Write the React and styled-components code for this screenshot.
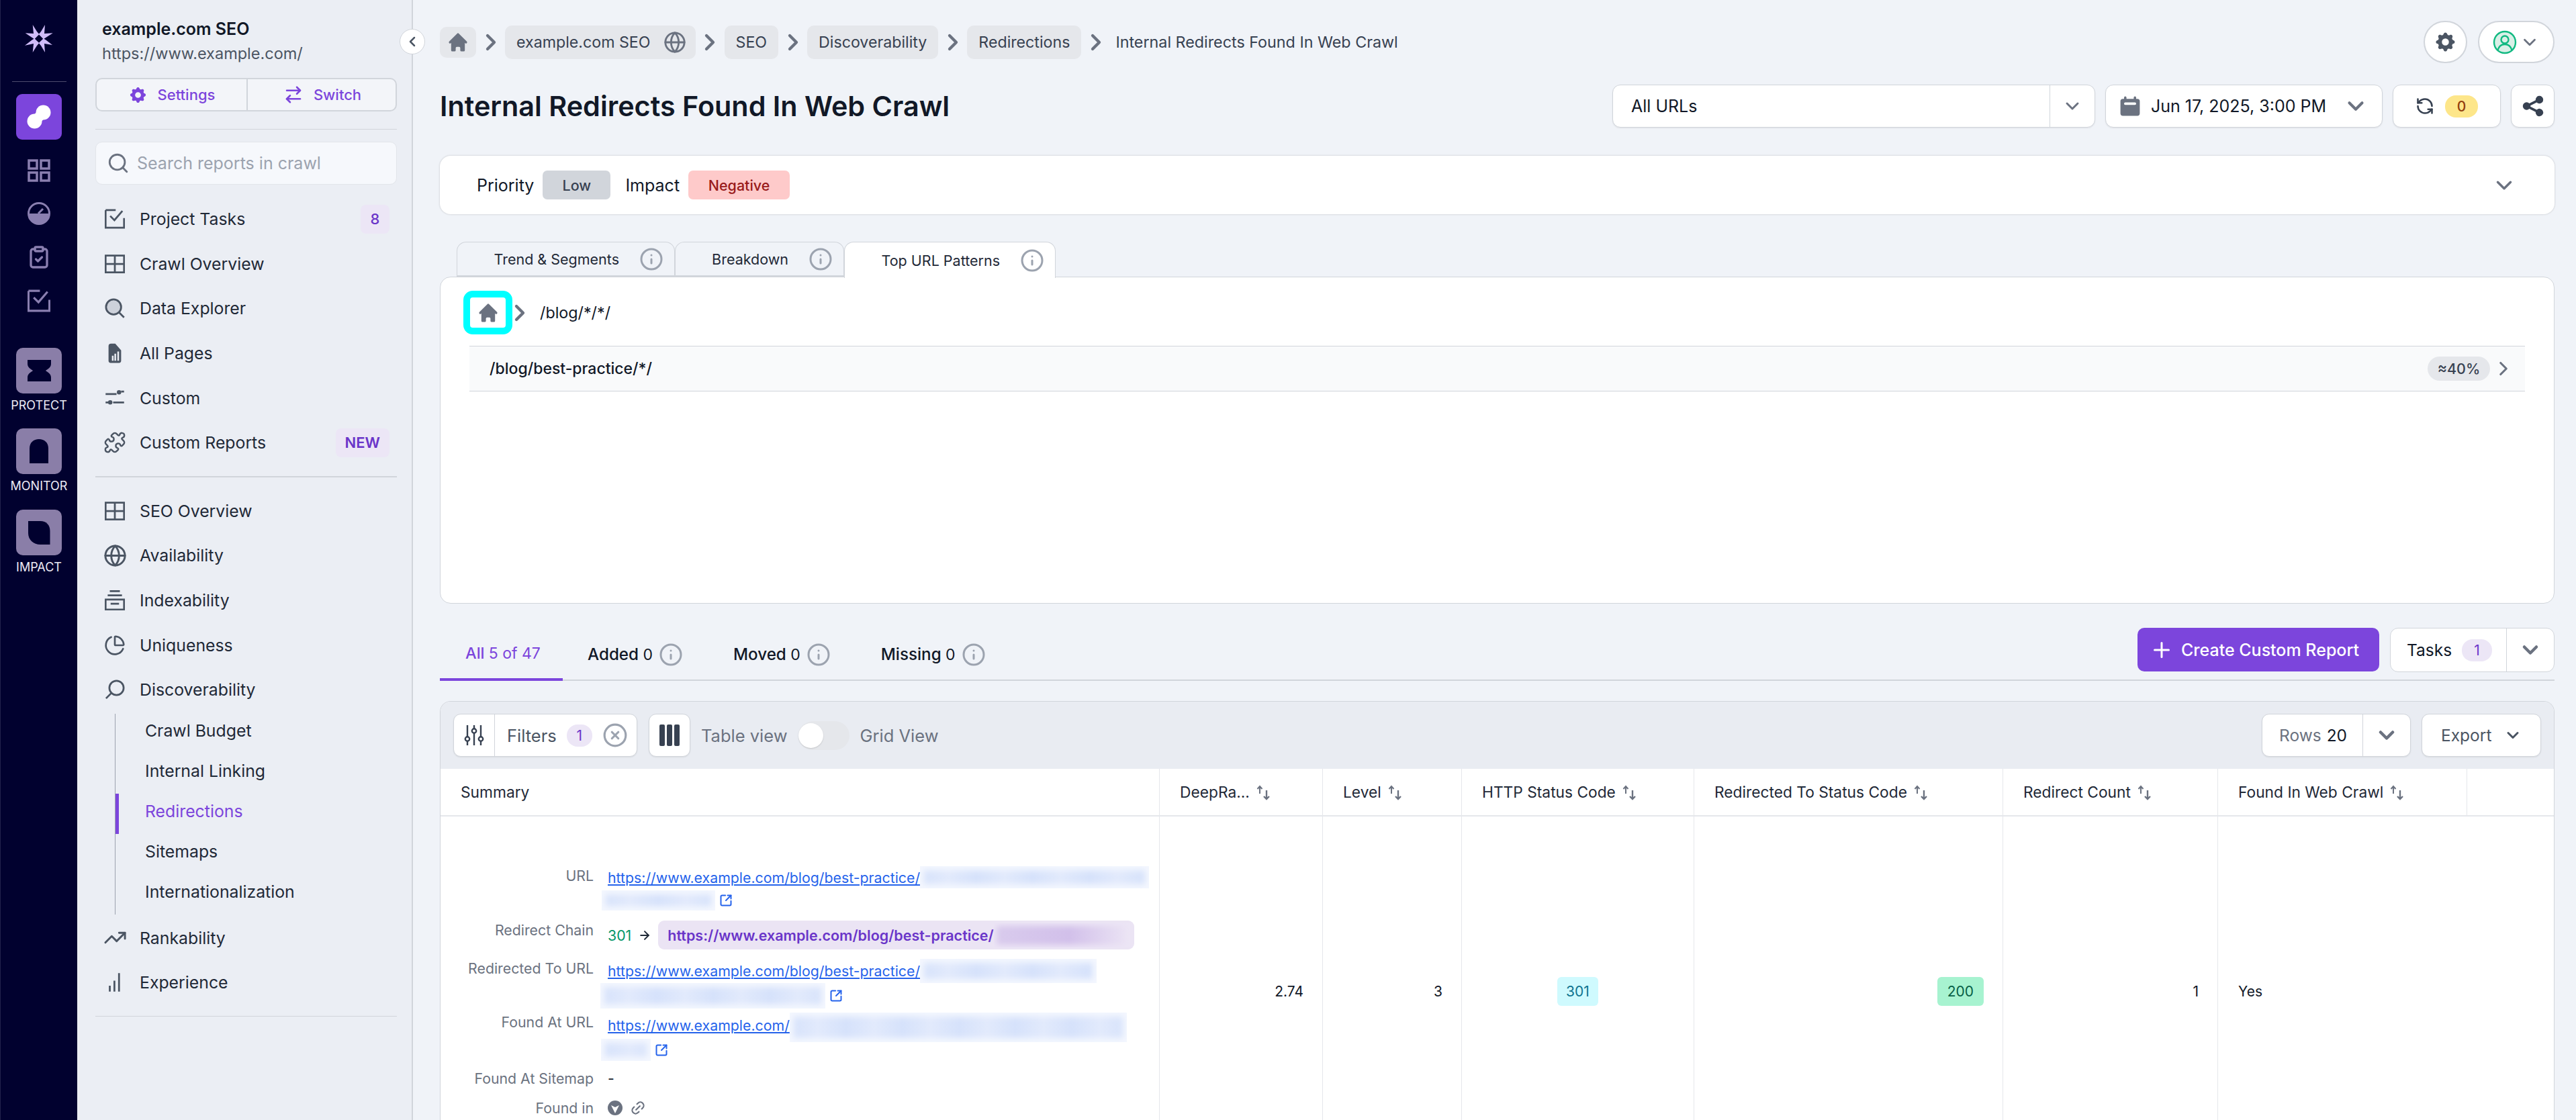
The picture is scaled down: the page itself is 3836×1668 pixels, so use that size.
import styled, { createGlobalStyle } from 'styled-components';
import {
  ArrowRight,
  ArrowRightLeft,
  ChartPie,
  ChevronDown,
  ChevronLeft,
  ChevronRight,
  CircleX,
  ClipboardCheck,
  Globe,
  Info,
  Link2,
  Plus,
  Puzzle,
  RefreshCcw,
  Search,
  SquareArrowOutUpRight,
  TrendingUp,
} from 'lucide-react';
import { HiCalendar, HiCog, HiHome, HiShare } from 'react-icons/hi';

const purple = '#7c45dc';

const Global = createGlobalStyle`
  html, body { margin: 0; padding: 0; background: #f0f3f8; }
  body { font-family: Inter, "Noto Sans", sans-serif; color: #111827; }
  * { box-sizing: border-box; }
  svg { display: block; flex: none; }
`;

const Page = styled.div`
  width: 3836px;
  height: 1668px;
  display: flex;
  overflow: hidden;
  background: #f0f3f8;
`;

/* far left rail */
const Rail = styled.nav`
  width: 115px;
  flex: none;
  background: #01012f;
  border-left: 1px solid #23224c;
  display: flex;
  flex-direction: column;
  align-items: center;
  padding-top: 37px;
`;
const RailRule = styled.div`
  width: 81px;
  height: 1px;
  background: #4d4c6d;
  margin-top: 42px;
`;
const ActiveTile = styled.div`
  width: 68px;
  height: 68px;
  flex: none;
  margin-top: 18px;
  border-radius: 9px;
  background: ${purple};
`;
const RailIcons = styled.div`
  display: flex;
  flex-direction: column;
  align-items: center;
  gap: 30px;
  margin-top: 29px;
  color: #8a7fb0;
`;
const RailGroup = styled.div`
  display: flex;
  flex-direction: column;
  align-items: center;
`;
const RailTile = styled.div`
  width: 68px;
  height: 68px;
  flex: none;
  border-radius: 10px;
  background: #8a7ea8;
  margin-top: ${(p) => p.$mt}px;
`;
const RailLabel = styled.div`
  margin-top: 7px;
  font-size: 18px;
  line-height: 22px;
  color: #eceaf4;
  white-space: nowrap;
`;

/* project sidebar */
const Sidebar = styled.aside`
  width: 500px;
  flex: none;
  position: relative;
  background: #ebeef4;
  border-right: 2px solid #d1d5db;
  padding: 28px 22px 0 27px;
`;
const Collapse = styled.button`
  position: absolute;
  top: 43px;
  right: -20px;
  width: 38px;
  height: 38px;
  padding: 0;
  border-radius: 50%;
  background: #fff;
  border: 1px solid #d1d5db;
  color: #4b5563;
  display: flex;
  align-items: center;
  justify-content: center;
  z-index: 2;
`;
const ProjectName = styled.div`
  padding-left: 10px;
  font-size: 25px;
  line-height: 30px;
  font-weight: 600;
  color: #111827;
`;
const ProjectUrl = styled.div`
  margin-top: 7px;
  padding-left: 10px;
  font-size: 23.500px;
  line-height: 30px;
  color: #4b5563;
`;
const SplitButtons = styled.div`
  margin-top: 21px;
  height: 50px;
  display: flex;
  background: #f3f5f9;
  border: 2px solid #d1d5db;
  border-radius: 10px;
`;
const SplitButton = styled.div`
  flex: ${(p) => p.$w}px 0 0;
  display: flex;
  align-items: center;
  justify-content: center;
  gap: 15px;
  font-size: 22px;
  font-weight: 500;
  color: ${purple};
  & + & { border-left: 2px solid #d1d5db; }
`;
const Rule = styled.div`
  height: ${(p) => p.$h || 1}px;
  background: #d1d5db;
  margin-top: ${(p) => p.$mt}px;
`;
const SearchBox = styled.div`
  margin-top: 18px;
  height: 64px;
  display: flex;
  align-items: center;
  gap: 11px;
  padding-left: 16px;
  background: #f6f8fc;
  border: 1.5px solid #e2e5ea;
  border-radius: 10px;
  font-size: 25px;
  color: #9ca3af;
  svg { color: #6b7280; }
`;
const Menu = styled.div`
  margin-top: ${(p) => p.$mt}px;
`;
const MenuItem = styled.div`
  height: 66.6px;
  display: flex;
  align-items: center;
  gap: 22px;
  padding: 0 11px 0 14px;
  font-size: 24.800px;
  color: #1f2937;
  svg { color: #4b5563; }
`;
const MenuGlobe = styled(Globe)`
  margin: 0 -2.5px;
`;
const MenuPie = styled(ChartPie)`
  margin: 0 -1px;
`;
const MenuPuzzle = styled(Puzzle)`
  margin: 0 -2px;
`;
const MenuTrend = styled(TrendingUp)`
  margin: 0 -2.5px;
`;
const MenuBadge = styled.span`
  margin-left: auto;
  height: 43px;
  padding: 0 14px;
  min-width: 43px;
  display: flex;
  align-items: center;
  justify-content: center;
  border-radius: 8px;
  background: #ece6f6;
  color: #6a35c9;
  font-size: 22px;
  font-weight: ${(p) => (p.$strong ? 600 : 500)};
`;
const SubMenu = styled.div`
  margin: 2px 0 2px 29px;
  border-left: 1.5px solid #9ca3af;
`;
const SubItem = styled.div`
  height: 59.8px;
  display: flex;
  align-items: center;
  padding: 0 0 8px 44px;
  font-size: 24.800px;
  color: ${(p) => (p.$active ? purple : '#1f2937')};
  box-shadow: ${(p) => (p.$active ? `inset 5px 0 0 ${purple}` : 'none')};
`;

/* main column */
const Main = styled.main`
  flex: 1;
  min-width: 0;
  padding: 31px 32px 0 40px;
`;
const TopBar = styled.div`
  height: 63px;
  display: flex;
  align-items: center;
`;
const Crumb = styled.div`
  height: ${(p) => (p.$home ? 46 : 50)}px;
  width: ${(p) => (p.$home ? '54px' : 'auto')};
  padding: ${(p) => (p.$home ? 0 : '0 17px')};
  display: flex;
  align-items: center;
  justify-content: center;
  gap: 19px;
  border-radius: 10px;
  background: #e5e7eb;
  font-size: 23.200px;
  color: #374151;
  svg { color: #6b7280; }
`;
const CrumbGlobe = styled(Globe)`
  margin-right: -3px;
`;
const CrumbSep = styled.div`
  width: 43px;
  display: flex;
  justify-content: center;
  color: #6b7280;
`;
const CrumbLast = styled.div`
  margin-left: 8px;
  font-size: 23.300px;
  color: #374151;
`;
const TopActions = styled.div`
  margin-left: auto;
  display: flex;
  gap: 16px;
`;
const RoundButton = styled.div`
  width: ${(p) => p.$w}px;
  height: 63px;
  display: flex;
  align-items: center;
  justify-content: center;
  gap: 4px;
  background: #fff;
  border: 2px solid #d1d5db;
  border-radius: 32px;
  color: #4b5563;
`;
const TitleRow = styled.div`
  margin-top: 32px;
  height: 64px;
  display: flex;
  align-items: center;
  justify-content: space-between;
`;
const Title = styled.h1`
  margin: 0;
  font-size: 41.300px;
  font-weight: 600;
  color: #111827;
`;
const Controls = styled.div`
  display: flex;
  gap: 15px;
`;
const Control = styled.div`
  width: ${(p) => p.$w}px;
  height: 64px;
  display: flex;
  align-items: center;
  background: #fff;
  border: 1.5px solid #d1d5db;
  border-radius: 12px;
  box-shadow: 0 1px 2px rgba(0, 0, 0, 0.08);
  font-size: 25px;
  color: #111827;
  padding: ${(p) => p.$pad || 0};
  justify-content: ${(p) => p.$justify || 'flex-start'};
  gap: ${(p) => p.$gap || 0}px;
`;
const ControlText = styled.span`
  flex: 1;
  padding-left: 27px;
`;
const ControlEnd = styled.div`
  width: 67px;
  height: 100%;
  border-left: 1px solid #d1d5db;
  display: flex;
  align-items: center;
  justify-content: center;
  color: #6b7280;
`;
const CountBadge = styled.span`
  width: 49px;
  height: 33px;
  border-radius: 16px;
  background: #fde68a;
  color: #92400e;
  font-size: 21px;
  font-weight: 500;
  display: flex;
  align-items: center;
  justify-content: center;
`;
const MetaCard = styled.section`
  margin-top: 42px;
  height: 87px;
  display: flex;
  align-items: center;
  padding: 0 56px 0 55px;
  background: #fff;
  border-radius: 16px;
  box-shadow: 0 0 3px rgba(0, 0, 0, 0.2);
  font-size: 25px;
  color: #111827;
`;
const CardChevron = styled(ChevronDown)`
  margin-left: auto;
  color: #6b7280;
`;
const Chip = styled.span`
  height: 43px;
  width: ${(p) => p.$w}px;
  margin: 0 22px 0 13px;
  display: flex;
  align-items: center;
  justify-content: center;
  border-radius: 7px;
  background: ${(p) => p.$bg};
  color: ${(p) => p.$fg};
  font-size: 21.500px;
  font-weight: 500;
`;
const Tabs = styled.div`
  margin: 41px 0 0 25px;
  height: 52px;
  display: flex;
`;
const Tab = styled.div`
  width: ${(p) => p.$w}px;
  height: ${(p) => (p.$active ? 54 : 52)}px;
  display: flex;
  align-items: center;
  justify-content: flex-end;
  gap: 30px;
  padding-right: 16px;
  position: relative;
  z-index: ${(p) => (p.$active ? 1 : 0)};
  background: ${(p) => (p.$active ? '#fff' : '#f0f3f8')};
  border: 1.5px solid #d1d5db;
  border-bottom: ${(p) => (p.$active ? 'none' : '2px solid #d1d5db')};
  border-radius: 14px 14px 0 0;
  font-size: 21.500px;
  color: #1f2937;
  svg { color: #9ca3af; }
`;
const Panel = styled.section`
  height: 487px;
  padding: 20px 43px 0 34px;
  background: #fff;
  border: 1.5px solid #d1d5db;
  border-radius: 16px;
`;
const PatternCrumbs = styled.div`
  display: flex;
  align-items: center;
  height: 65px;
  font-size: 23.300px;
  color: #111827;
`;
const HomeFrame = styled.div`
  width: 73px;
  height: 65px;
  display: flex;
  align-items: center;
  justify-content: center;
  border: 10px solid #00ffff;
  border-radius: 14px;
  color: #6b7280;
`;
const PatternSep = styled.div`
  width: 40px;
  margin: 0 10px 0 -9px;
  color: #6b7280;
`;
const PatternRow = styled.div`
  margin: 17px 0 0 9px;
  height: 68px;
  display: flex;
  align-items: center;
  padding: 0 15px 0 30px;
  background: #f9fafb;
  border-top: 1.5px solid #d1d5db;
  border-bottom: 1px solid #d1d5db;
  font-size: 23px;
  font-weight: 500;
  color: #111827;
  svg { color: #6b7280; }
`;
const PercentBadge = styled.span`
  margin: 0 3px 0 auto;
  height: 36px;
  width: 93px;
  border-radius: 18px;
  display: flex;
  align-items: center;
  justify-content: center;
  background: #e5e7eb;
  color: #374151;
  font-size: 21.500px;
  font-weight: 500;
`;
const SubTabsRow = styled.div`
  height: 115px;
  padding-top: 36px;
  display: flex;
  align-items: flex-start;
  justify-content: space-between;
  border-bottom: 2px solid #d1d5db;
`;
const SubTabs = styled.div`
  height: 79px;
  display: flex;
`;
const SubTab = styled.div`
  display: flex;
  align-items: center;
  gap: 9px;
  height: 79px;
  width: ${(p) => (p.$active ? '183px' : 'auto')};
  padding: 0 ${(p) => (p.$active ? '0' : '35px')} 0 ${(p) => (p.$active ? '38px' : '37px')};
  margin-right: ${(p) => (p.$active ? 0 : 3)}px;
  margin-bottom: -2px;
  font-size: ${(p) => (p.$active ? 23.5 : 24.2)}px;
  font-weight: 500;
  color: ${(p) => (p.$active ? purple : '#111827')};
  border-bottom: ${(p) => (p.$active ? `4px solid ${purple}` : 'none')};
  svg { color: #9ca3af; }
`;
const Count = styled.span`
  font-weight: 400;
  font-size: 23px;
`;
const SubActions = styled.div`
  display: flex;
  gap: 16px;
`;
const CreateButton = styled.div`
  width: 360px;
  height: 65px;
  display: flex;
  align-items: center;
  gap: 11.500px;
  padding-left: 17.500px;
  background: ${purple};
  border-radius: 10px;
  color: #fff;
  font-size: 25px;
  font-weight: 500;
`;
const TasksButton = styled.div`
  width: 245px;
  height: 66px;
  display: flex;
  align-items: center;
  background: #fff;
  border: 1.5px solid #d1d5db;
  border-radius: 12px;
  font-size: 24.500px;
  color: #111827;
`;
const TasksLabel = styled.div`
  width: 173px;
  height: 100%;
  display: flex;
  align-items: center;
  gap: 15px;
  padding-left: 24px;
  border-right: 1.5px solid #d1d5db;
`;
const PillCount = styled.span`
  width: ${(p) => p.$w}px;
  height: 33px;
  border-radius: 16px;
  background: #ece6f6;
  color: #6a35c9;
  font-size: 21px;
  display: flex;
  align-items: center;
  justify-content: center;
`;
const GrayEnd = styled.div`
  flex: 1;
  display: flex;
  justify-content: center;
  color: #6b7280;
`;
const TableWrap = styled.section`
  margin-top: 30px;
  border: 1.5px solid #d1d5db;
  border-bottom: none;
  border-radius: 16px 16px 0 0;
  overflow: hidden;
  background: #fff;
`;
const Toolbar = styled.div`
  height: 100px;
  display: flex;
  align-items: center;
  padding: 0 19px;
  background: #e9ecf2;
  font-size: 24.500px;
`;
const ToolButton = styled.div`
  height: 64px;
  display: flex;
  align-items: center;
  background: #fff;
  border: 1.5px solid #d1d5db;
  border-radius: 11px;
  color: #374151;
  box-shadow: 0 1px 2px rgba(0, 0, 0, 0.08);
  margin-left: ${(p) => p.$ml || 0}px;
  width: ${(p) => p.$w}px;
  flex: none;
`;
const FilterIconBox = styled.div`
  width: 61px;
  height: 100%;
  display: flex;
  align-items: center;
  justify-content: center;
  border-right: 1px solid #d1d5db;
`;
const FilterBody = styled.div`
  flex: 1;
  display: flex;
  align-items: center;
  gap: 15px;
  padding-left: 18px;
  font-size: 25.500px;
  color: #4b5563;
  svg { color: #9ca3af; }
`;
const Centered = styled.div`
  flex: 1;
  display: flex;
  justify-content: center;
`;
const ViewLabel = styled.span`
  margin: 0 16px;
  font-size: 25.500px;
  color: #6b7280;
`;
const Toggle = styled.div`
  width: 76px;
  height: 43px;
  border-radius: 22px;
  background: #e5e7eb;
  display: flex;
  align-items: center;
`;
const Knob = styled.div`
  width: 37px;
  height: 37px;
  border-radius: 50%;
  background: #fff;
  box-shadow: 0 1px 2px rgba(0, 0, 0, 0.15);
`;
const RowsLabel = styled.div`
  width: 150px;
  height: 100%;
  display: flex;
  align-items: center;
  gap: 8px;
  padding-left: 25px;
  border-right: 1px solid #d1d5db;
  color: #6b7280;
  b { font-weight: 400; color: #111827; }
`;
const ExportLabel = styled.div`
  display: flex;
  align-items: center;
  gap: 18px;
  padding-left: 28px;
  color: #4b5563;
  svg { color: #4b5563; }
`;
const ToolbarEnd = styled.div`
  margin-left: auto;
  display: flex;
  gap: 16px;
`;

const HeadRow = styled.div`
  display: grid;
  grid-template-columns: 1070px 243px 207px 346px 460px 320px 371px 1fr;
  height: 71px;
  border-bottom: 2px solid #e5e7eb;
`;
const HeadCell = styled.div`
  display: flex;
  align-items: center;
  gap: 8px;
  padding-left: 30px;
  font-size: 22.750px;
  color: #1f2937;
  white-space: nowrap;
  & + & { border-left: 1.5px solid #e5e7eb; }
`;
const BodyRow = styled.div`
  display: grid;
  grid-template-columns: 1070px 243px 207px 346px 460px 320px 1fr;
  height: 520px;
`;
const Cell = styled.div`
  display: flex;
  align-items: center;
  justify-content: ${(p) => p.$align || 'flex-end'};
  padding: 0 ${(p) => (p.$pad === undefined ? 28 : p.$pad)}px 0 30px;
  font-size: 21px;
  color: #111827;
  border-left: 1.5px solid #e5e7eb;
`;
const SummaryCell = styled.div`
  padding-top: 74px;
  font-size: 21.300px;
`;
const SummaryRow = styled.div`
  display: grid;
  grid-template-columns: 228px 1fr;
  column-gap: 21px;
  margin-top: ${(p) => p.$mt || 0}px;
`;
const FieldLabel = styled.div`
  text-align: right;
  line-height: 28px;
  color: #6b7280;
  white-space: nowrap;
`;
const ValueLine = styled.div`
  display: flex;
  align-items: ${(p) => (p.$top ? 'flex-start' : 'center')};
  height: ${(p) => p.$h}px;
  margin-left: ${(p) => p.$ml || 0}px;
  margin-top: ${(p) => p.$mt || 0}px;
  color: #111827;
`;
const TextLink = styled.a`
  color: #2563eb;
  text-decoration: underline;
  white-space: nowrap;
  line-height: ${(p) => (p.$h ? `${p.$h}px` : 'normal')};
`;
const Blur = styled.span`
  display: block;
  flex: none;
  width: ${(p) => p.$w}px;
  height: ${(p) => p.$h}px;
  background: repeating-linear-gradient(90deg, #d6e2fb 0, #e2eafc 42px, #d6e2fb 84px);
  box-shadow: inset 0 0 10px 6px #f4f7fe;
`;
const ChainBlur = styled.span`
  display: block;
  flex: none;
  width: 203px;
  height: 36px;
  background: linear-gradient(90deg, #d9cbed, #d2c0ea 55%, #ece5f5);
  box-shadow: inset 0 0 8px 4px #ece5f5;
`;
const ExternalIcon = styled(SquareArrowOutUpRight)`
  color: #2563eb;
  margin-left: 6px;
`;
const ChainCode = styled.span`
  color: #059669;
`;
const ChainArrow = styled(ArrowRight)`
  margin: 0 10px;
  color: #1f2937;
`;
const ChainChip = styled.div`
  width: 709px;
  height: 43px;
  display: flex;
  align-items: center;
  padding: 0 6px 0 14px;
  border-radius: 9px;
  background: #ebe4f4;
  color: #6a35c9;
  font-size: 21.500px;
  font-weight: 600;
  white-space: nowrap;
`;
const Status = styled.span`
  height: 43px;
  padding: 0 ${(p) => p.$pad}px;
  display: flex;
  align-items: center;
  border-radius: 6px;
  background: ${(p) => p.$bg};
  color: ${(p) => p.$fg};
`;
const FoundIcons = styled.div`
  display: flex;
  align-items: center;
  gap: 11px;
  color: #6b7280;
`;
const ChainLink = styled(Link2)`
  transform: rotate(-45deg);
`;

/* drawn icons that the packages don't have in this shape */
const Glyph = ({ size = 30, children, fill = 'none', stroke = 'currentColor', sw = 2.2 }) => (
  <svg width={size} height={size} viewBox="0 0 24 24" fill={fill} stroke={stroke} strokeWidth={sw}>
    {children}
  </svg>
);

const TaskIcon = ({ size }) => (
  <Glyph size={size}>
    <path d="M1 1.5h12M1 1.5v21h22V11" />
    <path d="M6.5 8.5l5 5L21 2.5" />
  </Glyph>
);
const GridIcon = () => (
  <Glyph>
    <path d="M1 2h22v20H1zM12 2v20M1 12h22" />
  </Glyph>
);
const ExplorerIcon = () => (
  <Glyph>
    <circle cx="10.5" cy="10.5" r="9" fill="#cdd1da" />
    <path d="M17 17l6 6" />
  </Glyph>
);
const PagesIcon = () => (
  <svg width="30" height="30" viewBox="0 0 24 24">
    <path d="M4.5 3.5a3 3 0 013-3h5l7 8v12.5a2.5 2.5 0 01-2.5 2.5H7a2.5 2.5 0 01-2.5-2.5z" fill="currentColor" />
    <path d="M8.5 15h2v6h-2zM11.500 12.500h2V21h-2zM15 10h2v11h-2z" fill="#ebeef4" />
  </svg>
);
const SlidersIcon = () => (
  <Glyph>
    <circle cx="17" cy="5" r="2.600" fill="currentColor" stroke="none" />
    <circle cx="6.500" cy="17" r="2.600" fill="currentColor" stroke="none" />
    <path d="M1 7h13M19.500 4h3.500M1 17h3M10 17h13" />
  </Glyph>
);
const BoxIcon = () => (
  <Glyph>
    <path d="M6 1h12M3.500 6h17M1 11h22v12H1zM7 16h10" />
  </Glyph>
);
const LensIcon = () => (
  <Glyph>
    <circle cx="14" cy="10" r="8.500" />
    <path d="M7.500 16.500L1.500 22.500" />
  </Glyph>
);
const BarsIcon = () => (
  <Glyph>
    <path d="M6 23v-7M11.500 23V10M17 23V1" />
  </Glyph>
);
const SquaresIcon = () => (
  <svg width="34" height="34" viewBox="0 0 34 34" fill="none" stroke="currentColor" strokeWidth="3.500">
    <path d="M2 2h12v12H2zM20 2h12v12H20zM2 20h12v12H2zM20 20h12v12H20z" />
  </svg>
);
const GaugeIcon = () => (
  <svg width="34" height="34" viewBox="0 0 34 34">
    <circle cx="17" cy="17" r="15.500" fill="none" stroke="currentColor" strokeWidth="3" />
    <path d="M1.500 17h31a15.500 15.500 0 01-31 0z" fill="currentColor" />
    <path d="M16 17l7-7" stroke="currentColor" strokeWidth="3" />
  </svg>
);
const LogoStar = () => (
  <svg width="42" height="42" viewBox="0 0 42 42">
    <path
      fillRule="evenodd"
      fill="#d0bcf8"
      d="M11.700 0L18 10L21 13.500L24 10L30 0L29 13L41.700 12.300L32 18.500L28.500 20.700L32 23L41 30L29 28L30 41L24 31L21 27.500L18 31L11.700 41L13 28L0 30.700L10 23L13.500 20.700L10 18.500L.7 12.300L13 13ZM21 14.500L14.800 20.700L21 26.800L27.200 20.700Z"
    />
  </svg>
);
const LinkBlob = () => (
  <svg width="68" height="68" viewBox="0 0 68 68">
    <circle cx="40.500" cy="27.500" r="11" fill="#fff" />
    <circle cx="27.500" cy="40.500" r="11" fill="#fff" />
    <path d="M38 30L30 38" stroke="#fff" strokeWidth="15" />
  </svg>
);
const TileShape = ({ d }) => (
  <svg width="68" height="68" viewBox="0 0 68 68">
    <path d={d} fill="#01012f" />
  </svg>
);
const UserIcon = () => (
  <svg width="36" height="36" viewBox="0 0 36 36" fill="none" stroke="#10b981" strokeWidth="2.400">
    <circle cx="18" cy="18" r="16" fill="#d9f0e7" />
    <circle cx="18" cy="14" r="5.500" />
    <path d="M7.500 30c1.500-6 5.500-9 10.500-9s9 3 10.500 9" />
  </svg>
);
const FiltersIcon = () => (
  <svg width="30" height="32" viewBox="0 0 30 32" fill="none" stroke="#374151" strokeWidth="2.400">
    <path d="M5 1v17M5 25v6M15 1v5M15 13v18M25 1v17M25 25v6" />
    <circle cx="5" cy="21.500" r="3.200" />
    <circle cx="15" cy="9.500" r="3.200" />
    <circle cx="25" cy="21.500" r="3.200" />
  </svg>
);
const ColumnsIcon = () => (
  <svg width="30" height="32" viewBox="0 0 30 32" fill="#374151">
    <rect x="0" y="0" width="8" height="32" rx="2" />
    <rect x="11" y="0" width="8" height="32" rx="2" />
    <rect x="22" y="0" width="8" height="32" rx="2" />
  </svg>
);
const SortIcon = () => (
  <svg width="24" height="24" viewBox="0 0 24 24" fill="none" stroke="#6b7280" strokeWidth="2">
    <path d="M7 14V3M3.500 7L7 3l3.500 4" />
    <path d="M17 9v13M13 18l4 4 4-4" strokeWidth="2.400" />
  </svg>
);
const FoundBadge = () => (
  <svg width="22" height="24" viewBox="0 0 22 24">
    <circle cx="11" cy="12" r="11" fill="currentColor" />
    <path d="M5 8l6 3 6-3-6 12z" fill="#fff" />
    <circle cx="11" cy="7" r="2.500" fill="currentColor" />
  </svg>
);

const crumbs = ['SEO', 'Discoverability', 'Redirections'];

const railTiles = [
  { label: 'PROTECT', mt: 53, d: 'M17 18H52V24C52 30 46 32 44 34C46 36 52 38 52 44V50H17V44C17 38 23 36 25 34C23 32 17 30 17 24Z' },
  { label: 'MONITOR', mt: 23, d: 'M20 52V30C20 21 26 16 34 16S48 21 48 30V52Z' },
  { label: 'IMPACT', mt: 24, d: 'M18 17H36C45 17 50.500 23 50.500 32V52H36C26 52 18 45 18 35Z' },
];

const Chevron = () => <ChevronRight size={40} strokeWidth={2.6} />;

function CrumbStep({ name }) {
  return (
    <>
      <CrumbSep>
        <Chevron />
      </CrumbSep>
      <Crumb>{name}</Crumb>
    </>
  );
}

export default function App() {
  return (
    <>
      <Global />
      <Page>
        <Rail>
          <LogoStar />
          <RailRule />
          <ActiveTile>
            <LinkBlob />
          </ActiveTile>
          <RailIcons>
            <SquaresIcon />
            <GaugeIcon />
            <ClipboardCheck size={36} strokeWidth={2.2} />
            <TaskIcon size={34} />
          </RailIcons>
          {railTiles.map((tile) => (
            <RailGroup key={tile.label}>
              <RailTile $mt={tile.mt}>
                <TileShape d={tile.d} />
              </RailTile>
              <RailLabel>{tile.label}</RailLabel>
            </RailGroup>
          ))}
        </Rail>

        <Sidebar>
          <Collapse>
            <ChevronLeft size={24} strokeWidth={2.5} />
          </Collapse>
          <ProjectName>example.com SEO</ProjectName>
          <ProjectUrl>https://www.example.com/</ProjectUrl>
          <SplitButtons>
            <SplitButton $w={223}>
              <HiCog size={29} />
              Settings
            </SplitButton>
            <SplitButton $w={224}>
              <ArrowRightLeft size={30} />
              Switch
            </SplitButton>
          </SplitButtons>
          <Rule $mt={26} />
          <SearchBox>
            <Search size={34} />
            Search reports in crawl
          </SearchBox>
          <Menu $mt={18}>
            <MenuItem>
              <TaskIcon />
              Project Tasks
              <MenuBadge>8</MenuBadge>
            </MenuItem>
            <MenuItem>
              <GridIcon />
              Crawl Overview
            </MenuItem>
            <MenuItem>
              <ExplorerIcon />
              Data Explorer
            </MenuItem>
            <MenuItem>
              <PagesIcon />
              All Pages
            </MenuItem>
            <MenuItem>
              <SlidersIcon />
              Custom
            </MenuItem>
            <MenuItem>
              <MenuPuzzle size={34} strokeWidth={1.7} />
              Custom Reports
              <MenuBadge $strong>NEW</MenuBadge>
            </MenuItem>
          </Menu>
          <Rule $mt={16} $h={2} />
          <Menu $mt={17}>
            <MenuItem>
              <GridIcon />
              SEO Overview
            </MenuItem>
            <MenuItem>
              <MenuGlobe size={35} strokeWidth={2} />
              Availability
            </MenuItem>
            <MenuItem>
              <BoxIcon />
              Indexability
            </MenuItem>
            <MenuItem>
              <MenuPie size={32} strokeWidth={2} />
              Uniqueness
            </MenuItem>
            <MenuItem>
              <LensIcon />
              Discoverability
            </MenuItem>
            <SubMenu>
              <SubItem>Crawl Budget</SubItem>
              <SubItem>Internal Linking</SubItem>
              <SubItem $active>Redirections</SubItem>
              <SubItem>Sitemaps</SubItem>
              <SubItem>Internationalization</SubItem>
            </SubMenu>
            <MenuItem>
              <MenuTrend size={35} strokeWidth={2} />
              Rankability
            </MenuItem>
            <MenuItem>
              <BarsIcon />
              Experience
            </MenuItem>
          </Menu>
          <Rule $mt={16} />
        </Sidebar>

        <Main>
          <TopBar>
            <Crumb $home>
              <HiHome size={34} />
            </Crumb>
            <CrumbSep>
              <Chevron />
            </CrumbSep>
            <Crumb>
              example.com SEO
              <CrumbGlobe size={34} strokeWidth={2} />
            </Crumb>
            {crumbs.map((name) => (
              <CrumbStep key={name} name={name} />
            ))}
            <CrumbSep>
              <Chevron />
            </CrumbSep>
            <CrumbLast>Internal Redirects Found In Web Crawl</CrumbLast>
            <TopActions>
              <RoundButton $w={65}>
                <HiCog size={35} />
              </RoundButton>
              <RoundButton $w={114}>
                <UserIcon />
                <ChevronDown size={30} color="#6b7280" strokeWidth={2.2} />
              </RoundButton>
            </TopActions>
          </TopBar>

          <TitleRow>
            <Title>Internal Redirects Found In Web Crawl</Title>
            <Controls>
              <Control $w={719}>
                <ControlText>All URLs</ControlText>
                <ControlEnd>
                  <ChevronDown size={32} strokeWidth={2.2} />
                </ControlEnd>
              </Control>
              <Control $w={413} $pad="0 8px 0 18px" $gap={13}>
                <HiCalendar size={36} color="#6b7280" />
                Jun 17, 2025, 3:00 PM
                <GrayEnd>
                  <ChevronDown size={38} strokeWidth={2.6} />
                </GrayEnd>
              </Control>
              <Control $w={161} $justify="center" $gap={16}>
                <RefreshCcw size={28} color="#374151" strokeWidth={2.2} />
                <CountBadge>0</CountBadge>
              </Control>
              <Control $w={65} $justify="center">
                <HiShare size={38} color="#374151" />
              </Control>
            </Controls>
          </TitleRow>

          <MetaCard>
            Priority
            <Chip $w={101} $bg="#d1d5db" $fg="#374151">
              Low
            </Chip>
            Impact
            <Chip $w={151} $bg="#fecaca" $fg="#991b1b">
              Negative
            </Chip>
            <CardChevron size={38} strokeWidth={2.2} />
          </MetaCard>

          <Tabs>
            <Tab $w={325}>
              Trend &amp; Segments
              <Info size={36} strokeWidth={2} />
            </Tab>
            <Tab $w={252}>
              Breakdown
              <Info size={36} strokeWidth={2} />
            </Tab>
            <Tab $w={315} $active>
              Top URL Patterns
              <Info size={36} strokeWidth={2} />
            </Tab>
          </Tabs>
          <Panel>
            <PatternCrumbs>
              <HomeFrame>
                <HiHome size={34} />
              </HomeFrame>
              <PatternSep>
                <Chevron />
              </PatternSep>
              /blog/*/*/
            </PatternCrumbs>
            <PatternRow>
              /blog/best-practice/*/
              <PercentBadge>≈40%</PercentBadge>
              <ChevronRight size={34} strokeWidth={2.2} />
            </PatternRow>
          </Panel>

          <SubTabsRow>
            <SubTabs>
              <SubTab $active>
                <span>
                  All <Count>5 of 47</Count>
                </span>
              </SubTab>
              <SubTab>
                <span>
                  Added <Count>0</Count>
                </span>
                <Info size={36} strokeWidth={2} />
              </SubTab>
              <SubTab>
                <span>
                  Moved <Count>0</Count>
                </span>
                <Info size={36} strokeWidth={2} />
              </SubTab>
              <SubTab>
                <span>
                  Missing <Count>0</Count>
                </span>
                <Info size={36} strokeWidth={2} />
              </SubTab>
            </SubTabs>
            <SubActions>
              <CreateButton>
                <Plus size={36} strokeWidth={2} />
                Create Custom Report
              </CreateButton>
              <TasksButton>
                <TasksLabel>
                  Tasks
                  <PillCount $w={45}>1</PillCount>
                </TasksLabel>
                <GrayEnd>
                  <ChevronDown size={36} strokeWidth={3} />
                </GrayEnd>
              </TasksButton>
            </SubActions>
          </SubTabsRow>

          <TableWrap>
            <Toolbar>
              <ToolButton $w={274}>
                <FilterIconBox>
                  <FiltersIcon />
                </FilterIconBox>
                <FilterBody>
                  Filters
                  <PillCount $w={38}>1</PillCount>
                  <CircleX size={38} strokeWidth={2} />
                </FilterBody>
              </ToolButton>
              <ToolButton $w={62} $ml={17}>
                <Centered>
                  <ColumnsIcon />
                </Centered>
              </ToolButton>
              <ViewLabel>Table view</ViewLabel>
              <Toggle>
                <Knob />
              </Toggle>
              <ViewLabel>Grid View</ViewLabel>
              <ToolbarEnd>
                <ToolButton $w={222}>
                  <RowsLabel>
                    Rows <b>20</b>
                  </RowsLabel>
                  <GrayEnd>
                    <ChevronDown size={36} strokeWidth={3} />
                  </GrayEnd>
                </ToolButton>
                <ToolButton $w={178}>
                  <ExportLabel>
                    Export
                    <ChevronDown size={28} strokeWidth={2.6} />
                  </ExportLabel>
                </ToolButton>
              </ToolbarEnd>
            </Toolbar>
            <HeadRow>
              <HeadCell>Summary</HeadCell>
              <HeadCell>
                DeepRa... <SortIcon />
              </HeadCell>
              <HeadCell>
                Level <SortIcon />
              </HeadCell>
              <HeadCell>
                HTTP Status Code <SortIcon />
              </HeadCell>
              <HeadCell>
                Redirected To Status Code <SortIcon />
              </HeadCell>
              <HeadCell>
                Redirect Count <SortIcon />
              </HeadCell>
              <HeadCell>
                Found In Web Crawl <SortIcon />
              </HeadCell>
              <HeadCell />
            </HeadRow>
            <BodyRow>
              <SummaryCell>
                <SummaryRow>
                  <FieldLabel>URL</FieldLabel>
                  <div>
                    <ValueLine $h={33}>
                      <TextLink>https://www.example.com/blog/best-practice/</TextLink>
                      <Blur $w={341} $h={33} />
                    </ValueLine>
                    <ValueLine $h={30} $ml={-9} $mt={3}>
                      <Blur $w={169} $h={30} />
                      <ExternalIcon size={20} strokeWidth={2.4} />
                    </ValueLine>
                  </div>
                </SummaryRow>
                <SummaryRow $mt={15}>
                  <FieldLabel>Redirect Chain</FieldLabel>
                  <ValueLine $h={43}>
                    <ChainCode>301</ChainCode>
                    <ChainArrow size={20} strokeWidth={2.4} />
                    <ChainChip>
                      https://www.example.com/blog/best-practice/
                      <ChainBlur />
                    </ChainChip>
                  </ValueLine>
                </SummaryRow>
                <SummaryRow $mt={14}>
                  <FieldLabel>Redirected To URL</FieldLabel>
                  <div>
                    <ValueLine $h={36}>
                      <TextLink>https://www.example.com/blog/best-practice/</TextLink>
                      <Blur $w={263} $h={36} />
                    </ValueLine>
                    <ValueLine $h={38} $ml={-11}>
                      <Blur $w={335} $h={38} />
                      <ExternalIcon size={20} strokeWidth={2.4} />
                    </ValueLine>
                  </div>
                </SummaryRow>
                <SummaryRow $mt={6}>
                  <FieldLabel>Found At URL</FieldLabel>
                  <div>
                    <ValueLine $h={39} $top>
                      <TextLink $h={39}>https://www.example.com/</TextLink>
                      <Blur $w={502} $h={44} />
                    </ValueLine>
                    <ValueLine $h={33} $ml={-10}>
                      <Blur $w={74} $h={33} />
                      <ExternalIcon size={20} strokeWidth={2.4} />
                    </ValueLine>
                  </div>
                </SummaryRow>
                <SummaryRow $mt={12}>
                  <FieldLabel>Found At Sitemap</FieldLabel>
                  <ValueLine $h={28}>-</ValueLine>
                </SummaryRow>
                <SummaryRow $mt={16}>
                  <FieldLabel>Found in</FieldLabel>
                  <ValueLine $h={28}>
                    <FoundIcons>
                      <FoundBadge />
                      <ChainLink size={24} strokeWidth={2.2} />
                    </FoundIcons>
                  </ValueLine>
                </SummaryRow>
              </SummaryCell>
              <Cell>2.74</Cell>
              <Cell>3</Cell>
              <Cell $align="center" $pad={30}>
                <Status $pad={13.5} $bg="#cffafe" $fg="#0e7490">
                  301
                </Status>
              </Cell>
              <Cell>
                <Status $pad={15} $bg="#a7f3d0" $fg="#065f46">
                  200
                </Status>
              </Cell>
              <Cell>1</Cell>
              <Cell $align="flex-start">Yes</Cell>
            </BodyRow>
          </TableWrap>
        </Main>
      </Page>
    </>
  );
}
